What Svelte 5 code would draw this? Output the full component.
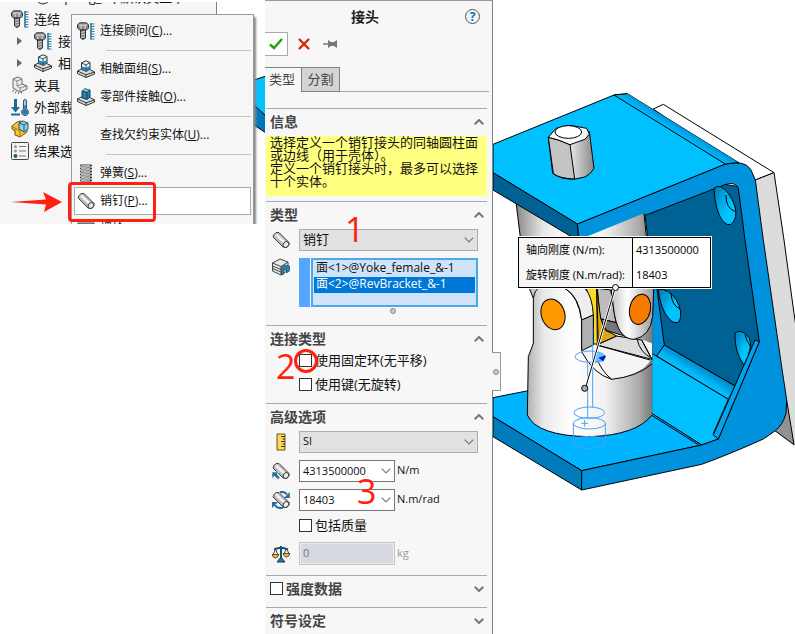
<script>
  const tree = [
    { icon: 'bolt', label: '连结', depth: 0 },
    { icon: 'bolt', label: '接头', depth: 1 },
    { icon: 'contact', label: '相触面组', depth: 1 },
    { icon: 'fixture', label: '夹具', depth: 0 },
    { icon: 'load', label: '外部载荷', depth: 0 },
    { icon: 'mesh', label: '网格', depth: 0 },
    { icon: 'results', label: '结果选项', depth: 0 }
  ];
  const menu = [
    { icon: 'bolt', label: '连接顾问', key: 'C' },
    null,
    { icon: 'contact', label: '相触面组', key: 'S' },
    { icon: 'component', label: '零部件接触', key: 'O' },
    null,
    { icon: '', label: '查找欠约束实体', key: 'U' },
    null,
    { icon: 'spring', label: '弹簧', key: 'S' },
    { icon: 'pin', label: '销钉', key: 'P', active: true },
    { icon: 'screw', label: '螺栓', key: 'B' }
  ];
  const faces = ['面<1>@Yoke_female_&-1', '面<2>@RevBracket_&-1'];

  let picked = $state(1);
  let fixedRing = $state(false);
  let keyed = $state(false);
  let mass = $state(false);
  let strength = $state(false);
  let axial = $state('4313500000');
  let rotational = $state('18403');
</script>

{#snippet pinShape()}
  <path d="M2 3.5 4 1.5 7 1.5 17 11.5V14L14 16.5 11 16 1 6Z" fill="#b9b9b9" stroke="#444" />
  <path d="M4 3.5 13 12" stroke="#f4f4f4" stroke-width="2.5" />
  <ellipse cx="14" cy="13.5" rx="2.5" ry="3" transform="rotate(40 14 13.5)" fill="#eee" stroke="#444" />
{/snippet}

{#snippet icon(name)}
  <svg class="icon" viewBox="0 0 18 18" fill="none" aria-hidden="true">
    {#if name === 'bolt'}
      <path d="M.5 3 2.500 .8H9.500L11.500 3V6L9.500 8H2.500L.5 6Z" fill="#8e8e8e" stroke="#333" />
      <path d="M2 3H10M4 3V7M8 3V7" stroke="#ddd" />
      <path d="M3.500 8H8.500V16L6 17.5 3.500 16Z" fill="#777" stroke="#333" />
      <path d="M4 10.5 8 9.5M4 13 8 12M4 15.5 8 14.5" stroke="#ddd" />
      <path d="M14 1V17.5" stroke="#1e6c94" stroke-width="1.5" />
      <path d="M14 2H17.5M14 4.5H17.5M14 7H17.5M14 9.5H17.5M14 12H17.5M14 14.5H17.5M14 17H17.5" stroke="#2b80aa" />
    {:else if name === 'contact' || name === 'component'}
      <path d="M.5 11 8 7 17.500 12V14L9 17.500 .5 13.500Z" fill="#ddd" stroke="#333" />
      <path d="M.5 11 9 14.800 17.500 12M9 14.800V17.500" stroke="#333" />
      {#if name === 'contact'}
        <path d="M4.500 3 9 .8 13 2.500V9L9.500 11.500 4.500 9.500Z" fill="#e8f4f8" stroke="#333" />
        <path d="M4.500 6V9.500L9.500 11.500 13 9V6L9 8Z" fill="#2b7fae" />
        <path d="M4.500 3 9 5 13 2.500M9 5V11" stroke="#235a78" />
      {:else}
        <path d="M5 3 8 .8 13 2V9L10 11.5 5 10Z" fill="#2b7fae" stroke="#173e55" />
        <path d="M5 3 8 1 13 2 10 4.5Z" fill="#79bfdf" />
        <path d="M5 3 10 4.5 13 2M10 4.5V11" stroke="#173e55" />
      {/if}
    {:else if name === 'fixture'}
      <path d="M2 3 7 1 11 3V8L16 10V13L9 16 2 12Z" fill="#ececec" stroke="#666" />
      <path d="M2 3 6 5V10L9 12 16 10M6 5 11 3M9 12V16M6 10 11 8" stroke="#888" />
      <path d="M3 13.500 1.500 16M5.500 15 4 17.5M8 16 7 18M11 15.500 10.500 17.500" stroke="#2b80aa" />
    {:else if name === 'load'}
      <path d="M4.5 1V12" stroke="#1f6893" stroke-width="3" />
      <path d="M0 9H9L4.5 14.500Z" fill="#1f6893" />
      <path d="M0 16.5H9" stroke="#1f6893" stroke-width="2" />
      <path d="M12.5 3A1.5 1.5 0 0 1 15.5 3V11A3.5 3.5 0 1 1 12.5 11Z" fill="#a8d0e2" stroke="#24566f" />
      <path d="M14 7V13" stroke="#2878a4" stroke-width="1.500" />
      <circle cx="14" cy="14" r="2.8" fill="#2878a4" />
    {:else if name === 'mesh'}
      <path d="M1 6 6 2 10 1 16 4V12L9 17 4 15V11L1 9Z" fill="#f5c43a" stroke="#795300" />
      <path d="M1 6 4 8 9 11V17M4 8V12" stroke="#a87808" />
      <path d="M8 3 12 1 17 3V9L13 12 8 9Z" fill="#92cde3" stroke="#1f5e7b" />
      <path d="M8 3 13 5 17 3M13 5V12" stroke="#1f5e7b" />
    {:else if name === 'results'}
      <rect x=".5" y=".5" width="17" height="17" rx="1" fill="#f3f3f3" stroke="#444" />
      <circle cx="4.5" cy="4.5" r="1.5" fill="#999" /><circle cx="4.5" cy="9" r="1.5" fill="#999" />
      <circle cx="4.5" cy="14" r="2" fill="#1f5e7b" />
      <path d="M8 4.500H15M8 9H15M8 14H15" stroke="#777" />
    {:else if name === 'spring'}
      <path d="M4 1.500H14M4 4.500H14M4 7.500H14M4 10.500H14M4 13.500H14M4 16.500H14" stroke="#333" stroke-width="2.200" stroke-linecap="round" />
      <path d="M4 1.500H13L4 4.500H13L4 7.500H13L4 10.500H13L4 13.500H13L4 16.500H13" stroke="#ccc" stroke-width=".8" />
    {:else if name === 'pin'}
      {@render pinShape()}
    {:else if name === 'screw'}
      <path d="M1 3H17V7H1Z" fill="#aaa" stroke="#444" />
    {:else if name === 'faces'}
      <path d="M.5 5 8 1 16 4V12L9 17 .5 13Z" fill="#e8e8e8" stroke="#444" />
      <path d="M.5 5 9 8.500 16 4M9 8.500V17M.5 8 9 11.500M.5 10.500 9 14" stroke="#444" />
      <path d="M9.500 9 13 7 17.500 8V13L14.500 15V12L12 12V16L9.500 17Z" fill="#2b7fae" stroke="#173e55" stroke-width=".6" />
    {:else if name === 'ruler'}
      <path d="M5 1H13V17H5Z" fill="#fbd95c" stroke="#6e5310" />
      <path d="M9 3.500H13M10.500 6H13M9 8.500H13M10.500 11H13M9 13.500H13" stroke="#4a3705" />
    {:else if name === 'axial'}
      {@render pinShape()}
      <path d="M0 10H7L5 12 8 15.500 6 17.500 2.500 14 0 16.500Z" fill="#1f7199" stroke="#f7f7f7" stroke-width=".6" />
    {:else if name === 'rotational'}
      {@render pinShape()}
      <path d="M8 1.200Q12.500 0 15 3.500M11 16.800Q5 18 3 14" stroke="#1f7199" stroke-width="2" />
      <path d="M17.800 1V7H12ZM0 17V11H6Z" fill="#1f7199" />
    {:else if name === 'balance'}
      <path d="M9 1V14M2 4.500Q9 1 16 4.500" stroke="#185474" stroke-width="2" />
      <path d="M3.500 4 1 10M3.500 4 6 10M14.500 3 12 9M14.500 3 17 9" stroke="#444" />
      <path d="M0 9.500H7Q6 13 3.500 13T0 9.500ZM11 8.500H18Q17 12 14.500 12T11 8.500Z" fill="#f3b04a" stroke="#6e4a13" />
      <path d="M9 12 13 17H5Z" fill="#23789f" stroke="#153f55" />
    {/if}
  </svg>
{/snippet}

{#snippet chevron(dir)}
  <svg class="chevron" class:up={dir === 'up'} viewBox="0 0 10 6" aria-hidden="true">
    <path d="M.7 .7 5 5 9.300 .7" fill="none" stroke="#777" stroke-width="2" />
  </svg>
{/snippet}

{#snippet heading(text)}
  <h2>{text}<button class="fold" aria-label="折叠{text}">{@render chevron('up')}</button></h2>
{/snippet}

<main>
  <aside>
    <svg class="sliver" viewBox="0 0 12 60" aria-hidden="true">
      <path d="M0 5 12 1V41L0 30Z" fill="#00c3ff" /><path d="M0 30 12 41V58L0 50Z" fill="#0078b8" />
      <path d="M0 5 12 1M0 30 12 41M0 50 12 58" stroke="#000" />
    </svg>
    <nav class="tree">
      <ul>
        <li class="d2"><svg class="icon" viewBox="0 0 18 18"><circle cx="9" cy="9" r="7" fill="#ddd" stroke="#333" /></svg>Spring_1 (-默认类型-)</li>
        {#each tree as row}
          <li class="d{row.depth}">
            {#if row.depth}<i class="twist"></i>{/if}
            {@render icon(row.icon)}<span>{row.label}</span>
          </li>
        {/each}
      </ul>
    </nav>
    <div class="menu" role="menu">
      {#each menu as item}
        {#if item}
          <button role="menuitem" class:active={item.active}>
            {@render icon(item.icon)}<span>{item.label}(<u>{item.key}</u>)...</span>
          </button>
        {:else}
          <hr />
        {/if}
      {/each}
    </div>
    <div class="frame"></div>
    <svg class="arrow" viewBox="0 0 52 20" aria-hidden="true"><path d="M0 10 35 7.500 32 0 51 10 33 20 35 12.500Z" fill="#ff2010" /></svg>
  </aside>

  <section class="panel">
    <header>
      <h1>接头</h1>
      <button class="help" aria-label="帮助">?</button>
    </header>
    <div class="actions">
      <button class="ok" aria-label="确定"><svg viewBox="0 0 14 12"><path d="M1 6.500 5 10 13 1" fill="none" stroke="#2c9c10" stroke-width="2.500" /></svg></button>
      <button aria-label="取消"><svg viewBox="0 0 14 12"><path d="M2 1 12 11M12 1 2 11" stroke="#e02000" stroke-width="2.300" /></svg></button>
      <button aria-label="保持可见"><svg viewBox="0 0 14 12"><path d="M0 6H6" stroke="#777" stroke-width="1.500" /><path d="M5 2 8 4H11L14 2V10L11 8H8L5 10Z" fill="#777" /></svg></button>
    </div>
    <div class="tabs" role="tablist">
      <button role="tab" aria-selected="true" class="current">类型</button>
      <button role="tab" aria-selected="false">分割</button>
    </div>

    <section class="group">
      {@render heading('信息')}
      <div class="info">
        <p>选择定义一个销钉接头的同轴圆柱面或边线（用于壳体）。</p>
        <p>定义一个销钉接头时，最多可以选择十个实体。</p>
      </div>
    </section>

    <section class="group">
      {@render heading('类型')}
      <div class="fields">
        <div class="row">
          {@render icon('pin')}
          <label class="drop cn"><select aria-label="接头类型"><option>销钉</option></select>{@render chevron('down')}</label>
        </div>
        <div class="row faces">
          {@render icon('faces')}
          <div class="swatch"></div>
          <ul class="list" role="listbox" aria-label="所选面">
            {#each faces as face, i}
              <li role="option" aria-selected={picked === i}><button onclick={() => (picked = i)}>{face}</button></li>
            {/each}
          </ul>
        </div>
      </div>
      <div class="grip"><i class="dot"></i></div>
    </section>

    <section class="group">
      {@render heading('连接类型')}
      <div class="checks">
        <label><input type="checkbox" bind:checked={fixedRing} />使用固定环(无平移)</label>
        <label><input type="checkbox" bind:checked={keyed} />使用键(无旋转)</label>
      </div>
    </section>

    <section class="group">
      {@render heading('高级选项')}
      <div class="fields">
        <div class="row">
          {@render icon('ruler')}
          <label class="drop"><select aria-label="单位"><option>SI</option></select>{@render chevron('down')}</label>
        </div>
        <div class="row">
          {@render icon('axial')}
          <label class="combo"><input type="text" aria-label="轴向刚度" bind:value={axial} />{@render chevron('down')}</label>
          <span class="unit">N/m</span>
        </div>
        <div class="row">
          {@render icon('rotational')}
          <label class="combo"><input type="text" aria-label="旋转刚度" bind:value={rotational} />{@render chevron('down')}</label>
          <span class="unit">N.m/rad</span>
        </div>
      </div>
      <div class="checks mass">
        <label><input type="checkbox" bind:checked={mass} />包括质量</label>
      </div>
      <div class="row last">
        {@render icon('balance')}
        <input class="kg" type="text" aria-label="质量" value="0" disabled />
        <span class="unit off">kg</span>
      </div>
    </section>

    <section class="group folded">
      <h2>
        <label><input type="checkbox" bind:checked={strength} />强度数据</label>
        <button class="fold" aria-label="展开强度数据">{@render chevron('down')}</button>
      </h2>
    </section>
    <section class="group folded">
      <h2>符号设定<button class="fold" aria-label="展开符号设定">{@render chevron('down')}</button></h2>
    </section>

    <b class="mark one">1</b>
    <b class="mark two">2</b>
    <b class="mark three">3</b>
    <i class="ring"></i>
    <button class="splitter" aria-label="收起面板"><i class="dot"></i></button>
  </section>

  <section class="view">
    <svg class="model" viewBox="9 -240 906 1902" stroke-linejoin="round" aria-hidden="true">
      <defs>
        <linearGradient id="body"><stop offset="0" stop-color="#888" /><stop offset=".2" stop-color="#e8e8e8" /><stop offset=".4" stop-color="#fff" /><stop offset=".65" stop-color="#f2f2f2" /><stop offset=".9" stop-color="#aaa" /><stop offset="1" stop-color="#777" /></linearGradient>
        <linearGradient id="stud"><stop offset="0" stop-color="#fff" /><stop offset=".5" stop-color="#e4e4e4" /><stop offset="1" stop-color="#888" /></linearGradient>
        <linearGradient id="arm"><stop offset="0" stop-color="#bbb" /><stop offset=".4" stop-color="#fff" /><stop offset="1" stop-color="#999" /></linearGradient>
        <linearGradient id="bend" gradientUnits="userSpaceOnUse" x1="545" y1="155" x2="567" y2="120"><stop offset="0" stop-color="#00c0ff" /><stop offset="1" stop-color="#0080cc" /></linearGradient>
        <linearGradient id="fillet" gradientUnits="userSpaceOnUse" x1="640" y1="855" x2="610" y2="905"><stop offset="0" stop-color="#0080c0" /><stop offset=".7" stop-color="#00bfff" /></linearGradient>
        <linearGradient id="hole" x1="0" y1="0" x2="1" y2="1"><stop offset="0" stop-color="#0078b5" /><stop offset=".6" stop-color="#00c3ff" /></linearGradient>
      </defs>
      <g stroke="#000" stroke-width="3">
        <path d="M490 87 520 73 852 278 796 300Z" fill="#fff" />
        <path d="M796 300 852 278 882 480 912 700 930 800V1110L855 1055 890 960Z" fill="#dcdcdc" stroke="none" />
        <path d="M796 300 852 278 882 480 912 700 925 790" fill="none" />
        <path d="M890 960 912 1094 855 1052Z" fill="#929292" />
        <path d="M465 405 700 312 745 320 810 785 735 918 523 795 490 620Z" fill="#006294" />
        <path d="M485 600 500 620 523 795 500 830 485 820Z" fill="#0090dc" />
        <path d="M523 795 735 918 715 958 500 828Z" fill="url(#fillet)" />
        <path d="M485 820 715 958 670 1060 685 1077 635 1095 485 1000Z" fill="#00c0ff" />
        <path d="M9 953 115 932 485 1000 635 1095 275 1172 9 1010Z" fill="#00b4ff" />
        <path d="M485 1006 625 1094" />
        <path d="M9 1010 275 1172V1230L9 1070Z" fill="#007cbc" />
        <path d="M262 432 706 252Q765 240 782 268L796 300 820 480 875 860 890 960 888 1000Q878 1035 856 1052L820 1077Q720 1122 635 1153L275 1230V1172L635 1095 685 1077 808 785 765 480 745 325Q735 303 705 314L266 483Z" fill="#0092dc" />
        <path d="M795 780 808 785 685 1077 670 1065Z" fill="#00a4ee" />
        <path d="M672 325Q690 308 715 340 742 378 737 410 725 450 700 425 675 395 672 325Z" fill="url(#hole)" />
        <path d="M708 345Q707 385 736 395" fill="none" />
        <path d="M505 628Q535 625 558 658 580 695 568 725 548 738 525 700 508 668 505 628Z" fill="url(#hole)" />
        <path d="M543 640Q545 675 570 687" fill="none" />
        <path d="M735 758Q758 745 778 775 790 800 762 855 732 815 735 758Z" fill="url(#hole)" />
        <path d="M765 765Q770 785 784 802" fill="none" />

        <path d="M78 366 92 480 118 625 130 655V790L115 830 112 1005Q140 1068 300 1070 440 1065 486 1005L488 640 470 480 462 400 265 480Z" fill="url(#body)" stroke="none" />
        <path d="M78 366 92 480 118 625 130 655V790L115 830 112 1005Q140 1068 300 1070 440 1065 486 1005M470 480 462 400" fill="none" />
        <path d="M285 600H370L430 770 486 790V830Q470 880 365 898 310 880 275 810Z" fill="#f5f5f5" stroke="none" />
        <path d="M320 795 380 768 455 780 486 838Z" fill="#dcdcdc" />
        <path d="M455 780 486 838M442 780Q450 815 480 832M320 795 480 840M275 815Q310 882 365 898 440 890 486 852M318 830Q335 875 365 898" fill="none" />
        <path d="M322 625 362 630 378 728 330 716Z" fill="#bcbcbc" />
        <path d="M330 716 378 728 405 768 350 752Z" fill="#777" />
        <path d="M288 620H320L322 792H309L310 710Z" fill="#ffd820" />
        <path d="M320 625 332 715 345 750 380 768 325 792Z" fill="#ddaa14" />
        <path d="M360 600 370 680Q380 778 432 778 480 770 488 710L492 600Z" fill="url(#arm)" />
        <path d="M145 625Q135 630 130 655M225 625Q265 650 275 720V812" fill="none" />
        <path d="M225 625H285Q307 650 310 705L275 720Q268 650 225 625Z" fill="#eee" />
        <path d="M275 720 310 705V795L275 812Z" fill="#b0b0b0" />
        <ellipse cx="189" cy="703" rx="35" ry="47" transform="rotate(-18 189 703)" fill="#ff9900" />
        <ellipse cx="450" cy="688" rx="31" ry="46" transform="rotate(12 450 688)" fill="#f57c00" />

        <path d="M9 193 372 45 412 41 745 247 706 252 262 432 9 278Z" fill="#00c0ff" />
        <path d="M372 45 412 41 745 247 706 252Z" fill="url(#bend)" stroke="none" />
        <path d="M372 45 706 252 748 247M372 45 412 41" fill="none" />
        <path d="M9 278 262 432 266 483 9 330Z" fill="#006294" />
        <path d="M175 172 188 280Q215 300 255 297L285 291Q305 280 312 265L298 155Z" fill="url(#stud)" />
        <path d="M175 172 205 180 240 194 254 297Q205 295 190 280Z" fill="#c4c4c4" />
        <path d="M175 172 198 145 240 136 290 145 298 162 285 178 240 194 205 180Z" fill="#f6f6f6" />
        <ellipse cx="235" cy="156" rx="40" ry="19" fill="#fff" />
      </g>
      <g fill="none" stroke="#4ca2f7" stroke-width="3">
        <path d="M318 812 348 828 338 845 315 848Z" fill="#68c0ff" stroke="none" />
        <ellipse cx="300" cy="830" rx="45" ry="17" />
        <path d="M328 834 346 828 340 842Z" fill="#0018c0" stroke="#0018c0" />
        <path d="M293 850V1012M308 740V982M250 1030V1087M346 1030V1087M274 1030H294M284 1020V1040" />
        <ellipse cx="298" cy="998" rx="46" ry="17" /><ellipse cx="298" cy="1030" rx="48" ry="17" /><ellipse cx="298" cy="1087" rx="48" ry="18" />
      </g>
      <path d="M376 622 286 925" stroke="#fff" stroke-width="8" />
      <path d="M376 622 286 925" stroke="#000" stroke-width="3" />
      <circle cx="284" cy="925" r="9" fill="#aaa" stroke="#000" stroke-width="3" />
    </svg>
    <table class="callout">
      <tbody>
        <tr><th scope="row">轴向刚度 (N/m):</th><td>{axial}</td></tr>
        <tr><th scope="row">旋转刚度 (N.m/rad):</th><td>{rotational}</td></tr>
      </tbody>
    </table>
    <i class="anchor"></i>
  </section>
</main>

<style>
  :global(body) { margin: 0; background: #fff; }
  main {
    display: grid;
    grid-template-columns: 265px 228px minmax(0, 1fr);
    min-height: 100vh;
    overflow: hidden;
    font: 13px/14px "Open Sans", "Noto Sans CJK SC", sans-serif;
    color: #111;
  }
  main :is(h1, h2, p, ul) { margin: 0; padding: 0; list-style: none; }
  main :is(button, input, select) { font: inherit; color: inherit; margin: 0; padding: 0; border: 0; background: none; box-sizing: border-box; }
  .icon { width: 18px; height: 18px; flex: none; }

  aside { position: relative; height: 224px; overflow: hidden; }
  .tree { width: 216px; height: 222px; margin-top: 2px; overflow: hidden; background: #f6f6f6; border-right: 1px solid #808080; }
  .tree ul { margin-top: -16px; }
  .tree li { display: flex; align-items: center; gap: 5px; height: 22px; padding-left: 11px; white-space: nowrap; }
  .tree .d1 { padding-left: 17px; gap: 6px; }
  .tree .d2 { padding-left: 34px; }
  .twist { border: 4px solid transparent; border-left: 5px solid #666; border-right: 0; margin-right: 6px; }
  .menu {
    position: absolute; left: 71px; top: 14px; width: 183px; box-sizing: border-box;
    padding: 2px; background: #f6f6f6; border: 1px solid #999; box-shadow: 2px 3px 2px #888;
    font-size: 12px;
  }
  .menu button { display: flex; align-items: center; gap: 5px; width: 100%; height: 28px; padding-left: 2px; border: 1px solid transparent; white-space: nowrap; }
  .menu .active { background: #fff; border-color: #aaa; }
  .menu hr { height: 1px; margin: 5px 0 4px 32px; border: 0; background: #c4c4c4; }
  .frame { position: absolute; left: 68px; top: 182px; width: 82px; height: 34px; border: 3px solid #ff2010; border-radius: 4px; }
  .arrow { position: absolute; left: 11px; top: 192px; width: 52px; height: 20px; }
  .sliver { position: absolute; left: 254px; top: 75px; width: 12px; height: 60px; }

  .panel { position: relative; z-index: 1; background: #f7f7f7; border-right: 1px solid #808080; box-sizing: border-box; }
  header { display: flex; align-items: center; height: 32px; padding-right: 12px; border-top: 1px solid #999; box-sizing: border-box; }
  header h1 { flex: 1; text-align: center; font-size: 14px; font-weight: 700; color: #222; }
  .panel .help { width: 15px; height: 15px; border: 1px solid #555; border-radius: 50%; background: #eef6fb; color: #1674a5; font-size: 12px; font-weight: 700; line-height: 12px; }
  .actions { display: flex; align-items: center; gap: 12px; height: 24px; }
  .actions button { display: grid; place-items: center; height: 24px; }
  .actions svg { width: 14px; height: 12px; }
  .actions .ok { width: 23px; background: #fff; border: 1px solid #aaa; border-left: 0; margin-right: -3px; }
  .tabs { display: flex; height: 25px; margin: 11px 3px 16px 0; box-shadow: inset 0 -1px #aaa; }
  .tabs button { width: 39px; padding-bottom: 2px; background: #d4d4d4; border: 1px solid #808080; color: #444; }
  .tabs .current { width: 36px; padding-right: 2px; background: #f7f7f7; border-width: 1px 0 0; }

  .group { margin: 0 5px 0 1px; border-top: 1px solid #aaa; }
  .group h2 { display: flex; align-items: center; justify-content: space-between; height: 27px; padding: 0 3px 2px 4px; box-sizing: border-box; font-size: 14px; font-weight: 700; color: #444; }
  .folded { height: 31px; }
  .chevron { display: block; width: 10px; height: 6px; flex: none; }
  .up { transform: rotate(180deg); }
  .info { height: 60px; margin-bottom: 5px; padding: 0 4px; background: #ffff80; line-height: 13px; box-sizing: border-box; }

  .fields { display: flex; flex-direction: column; gap: 7px; }
  .row { display: flex; align-items: center; padding: 0 9px 0 6px; }
  .row .icon { margin-right: 9px; }
  .drop { position: relative; flex: 1; height: 22px; font-size: 11px; }
  .drop.cn { font-size: 13px; }
  .drop select { width: 100%; height: 22px; padding: 0 0 2px 3px; appearance: none; background: #e1e1e1; border: 1px solid #adadad; border-radius: 0; }
  .drop .chevron, .combo .chevron { position: absolute; right: 4px; top: 8px; }
  .drop path, .combo path { stroke-width: 1.2; }
  .faces { align-items: stretch; height: 49px; }
  .swatch { width: 11px; margin-right: 1px; background: #55a6ff; }
  .row .list { flex: 1; background: #cfe4fa; border: 2px solid #4ca8e8; font-size: 12px; box-sizing: border-box; }
  .list li { height: 16px; margin: 0 1px; }
  .list li:first-child { margin-top: 1px; }
  .list button { width: 100%; height: 16px; padding: 0 0 2px 2px; text-align: left; line-height: 14px; white-space: nowrap; }
  .list [aria-selected="true"] { background: #0078d7; color: #fff; }
  .grip { display: flex; justify-content: center; align-items: center; height: 8px; padding: 0 0 10px 33px; }
  .dot { display: block; width: 4px; height: 4px; border: 1px solid #888; border-radius: 50%; background: #ccc; }

  .checks { display: flex; flex-direction: column; gap: 10px; padding: 0 0 12px 33px; }
  .checks.mass { padding: 7px 0 10px 33px; }
  .checks label, h2 label { display: flex; align-items: center; gap: 3px; height: 14px; white-space: nowrap; }
  .panel input[type="checkbox"] { appearance: none; width: 13px; height: 13px; border: 1px solid #333; background: #fff; }
  .panel input[type="checkbox"]:checked { box-shadow: inset 0 0 0 3px #fff; background: #333; }
  .combo { position: relative; width: 96px; height: 22px; font-size: 11px; }
  .combo input { width: 100%; height: 22px; padding: 0 20px 2px 3px; background: #fff; border: 1px solid #777; }
  .unit { margin-left: 2px; padding-bottom: 2px; font-size: 11px; }
  .off { color: #999; }
  .panel .kg { width: 96px; height: 23px; padding: 0 3px 2px; font-size: 11px; color: #777; background: #d6dae0; border: 1px solid #c4c4c4; box-shadow: inset 0 0 0 1px #eee; }
  .last { padding-bottom: 10px; }

  .mark { position: absolute; color: #ff2010; font-size: 34px; line-height: 34px; font-weight: 400; }
  .one { left: 80px; top: 212px; }
  .two { left: 11px; top: 349px; }
  .three { left: 92px; top: 474px; }
  .ring { position: absolute; left: 29px; top: 349px; width: 18px; height: 18px; border: 3px solid #ff2010; border-radius: 50%; }
  .panel .splitter { position: absolute; right: -9px; top: 352px; display: grid; place-items: center; width: 9px; height: 39px; background: #f7f7f7; border: 1px solid #999; border-left: 0; }

  .view { position: relative; }
  .model { display: block; width: 302px; height: 634px; }
  .callout { position: absolute; left: 25px; top: 237px; width: 193px; height: 51px; border-collapse: collapse; border: 1px solid #000; outline: 1px solid #fff; background: #fff; font-size: 11px; color: #000; white-space: nowrap; }
  .callout th { width: 106px; padding: 0 0 0 7px; text-align: left; font-weight: 400; background: #f6f6f6; border-right: 1px solid #000; }
  .callout td { padding: 0 0 0 3px; }
  .anchor { position: absolute; left: 119px; top: 284px; width: 5px; height: 5px; border: 1px solid #000; border-radius: 50%; background: #fff; }
</style>
